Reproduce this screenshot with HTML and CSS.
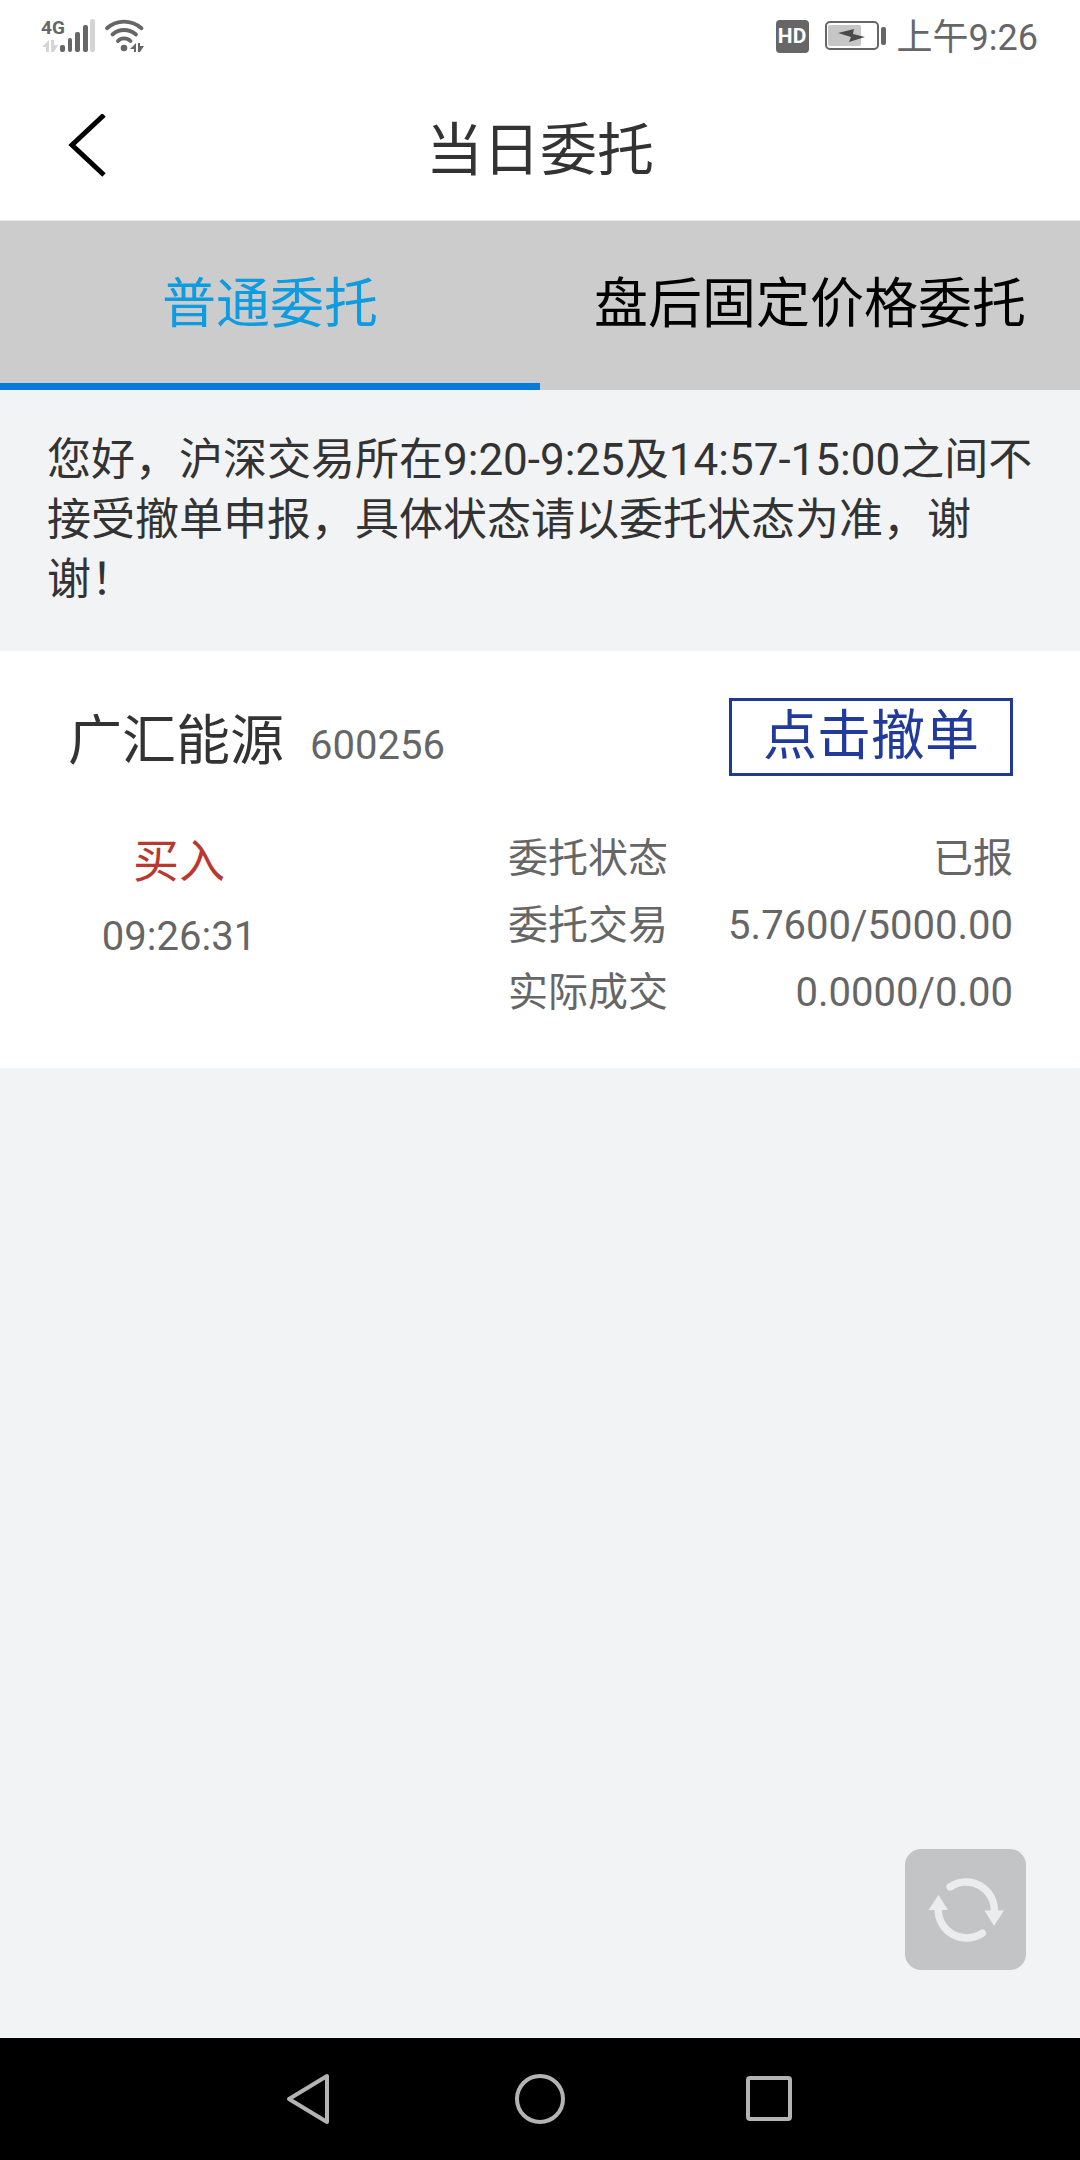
FILE: index.html
```html
<!DOCTYPE html>
<html lang="zh-CN">
<head>
<meta charset="utf-8">
<meta name="viewport" content="width=device-width, initial-scale=1">
<title>当日委托</title>
<link rel="stylesheet" href="styles.css">
</head>
<body>
<div class="status-bar">
  <svg class="status-signal" width="108" height="40" viewBox="40 16 108 40" role="img" aria-label="4G 信号与无线网络">
    <text class="network-type" x="41" y="34">4G</text>
    <g fill="#d4d4d4">
      <path d="M49 40v12h-3v-5h-4zM51 40h3v5h4l-4 7h-3z"/>
      <rect x="90" y="19" width="5" height="33" rx="2"/>
    </g>
    <g fill="#666">
      <rect x="60" y="45" width="5" height="7" rx="2"/>
      <rect x="68" y="38" width="4" height="14" rx="2"/>
      <rect x="75" y="32" width="5" height="20" rx="2"/>
      <rect x="83" y="25" width="5" height="27" rx="2"/>
      <circle cx="124" cy="48" r="3.3"/>
      <path d="M136 43v9h-2v-3h-4zM138 43h2v3h4l-4 6h-2z"/>
    </g>
    <g fill="none" stroke="#666" stroke-width="3.800" stroke-linecap="round">
      <path d="M107 28.200C117 19.500 131 19.500 141.500 28.200"/>
      <path d="M112.500 34.500C119 28.500 129 28.500 136 34.500"/>
      <path d="M118 41C121 37.500 127 37.500 130.500 41"/>
    </g>
  </svg>
  <div class="status-right">
    <span class="hd-badge">HD</span>
    <svg class="battery" width="62" height="32" viewBox="826 21 62 32" role="img" aria-label="正在充电">
      <rect x="827" y="23" width="52" height="27" rx="4" fill="none" stroke="#666" stroke-width="2"/>
      <rect x="829" y="26" width="33" height="21" rx="2" fill="#c6c6c6"/>
      <path d="M839 34L855 30L854 35L866 38L850 43L852 38Z" fill="#4a4a4a"/>
      <rect x="882" y="28" width="5" height="18" rx="2" fill="#666"/>
    </svg>
    <time class="clock">上午9:26</time>
  </div>
</div>

<header class="title-bar">
  <button class="back" type="button" aria-label="返回">
    <svg width="40" height="64" viewBox="0 0 40 64" aria-hidden="true">
      <path d="M36 1L4 31L36 61" fill="none" stroke="#000" stroke-width="5"/>
    </svg>
  </button>
  <h1 class="title">当日委托</h1>
</header>

<nav class="tabs">
  <a class="tab tab-active" href="#normal" aria-current="page">普通委托</a>
  <a class="tab" href="#after-hours">盘后固定价格委托</a>
</nav>

<main class="content">
  <p class="notice">您好，沪深交易所在9:20-9:25及14:57-15:00之间不接受撤单申报，具体状态请以委托状态为准，谢谢！</p>

  <article class="order">
    <div class="order-head">
      <h2 class="stock-name">广汇能源</h2>
      <span class="stock-code">600256</span>
      <button class="cancel" type="button">点击撤单</button>
    </div>
    <div class="order-body">
      <div class="order-side">
        <span class="direction">买入</span>
        <time class="order-time">09:26:31</time>
      </div>
      <dl class="details">
        <div class="detail"><dt>委托状态</dt><dd>已报</dd></div>
        <div class="detail"><dt>委托交易</dt><dd>5.7600/5000.00</dd></div>
        <div class="detail"><dt>实际成交</dt><dd>0.0000/0.00</dd></div>
      </dl>
    </div>
  </article>

  <button class="refresh" type="button" aria-label="刷新">
    <svg width="76" height="68" viewBox="0 0 76 68" aria-hidden="true">
      <g fill="none" stroke="#ebecee" stroke-width="7.500" stroke-linecap="round">
        <path d="M22.200 10.800A28.300 28.300 0 0 1 66.300 36"/>
        <path d="M54.300 57.200A28.300 28.300 0 0 1 10.300 32"/>
      </g>
      <path d="M56.500 34.500H76L66 50Z" fill="#ebecee"/>
      <path d="M0.500 34H20L10.500 19Z" fill="#ebecee"/>
    </svg>
  </button>
</main>

<footer class="system-nav">
  <button class="nav-key" type="button" aria-label="返回键">
    <svg width="54" height="54" viewBox="0 0 54 54" aria-hidden="true">
      <path d="M6 27L44 4V50Z"/>
    </svg>
  </button>
  <button class="nav-key" type="button" aria-label="主屏幕">
    <svg width="54" height="54" viewBox="0 0 54 54" aria-hidden="true">
      <circle cx="27" cy="27" r="23"/>
    </svg>
  </button>
  <button class="nav-key" type="button" aria-label="最近任务">
    <svg width="54" height="54" viewBox="0 0 54 54" aria-hidden="true">
      <rect x="5" y="6" width="42" height="41" rx="2"/>
    </svg>
  </button>
</footer>
</body>
</html>
```

FILE: styles.css
```css
* {
  box-sizing: border-box;
}

body {
  margin: 0;
  min-height: 100vh;
  display: flex;
  flex-direction: column;
  background: #f2f3f5;
  color: #333;
  font-family: Roboto, "Noto Sans CJK SC", sans-serif;
  font-size: 40px;
}

button {
  margin: 0;
  padding: 0;
  border: 0;
  background: none;
  color: inherit;
  font: inherit;
  cursor: pointer;
}

svg {
  display: block;
}

h1,
h2,
p,
dl,
dd {
  margin: 0;
  font-weight: 400;
}

/* Phone status bar */
.status-bar {
  display: flex;
  justify-content: space-between;
  align-items: center;
  height: 72px;
  padding: 0 42px 0 40px;
  background: #fff;
  color: #666;
}

.network-type {
  fill: #666;
  font-size: 19px;
  font-weight: 700;
}

.status-right {
  display: flex;
  align-items: center;
}

.hd-badge {
  width: 33px;
  margin-right: 16px;
  border-radius: 4px;
  background: #666;
  color: #fff;
  font-size: 21px;
  font-weight: 700;
  line-height: 33px;
  text-align: center;
}

.battery {
  margin-right: 10px;
}

.clock {
  padding-top: 4px;
  font-size: 36px;
  line-height: 40px;
}

/* Page title */
.title-bar {
  display: grid;
  grid-template-columns: 1fr auto 1fr;
  align-items: center;
  height: 149px;
  padding: 0 68px;
  border-bottom: 1px solid #e8e8e8;
  background: #fff;
}

.back {
  justify-self: start;
}

.title {
  padding-top: 10px;
  font-size: 57px;
  line-height: 80px;
}

/* Order type tabs */
.tabs {
  display: grid;
  grid-template-columns: 1fr 1fr;
  background: #ccc;
}

.tab {
  height: 169px;
  padding-top: 3px;
  border-bottom: 7px solid transparent;
  color: #000;
  font-size: 54px;
  line-height: 162px;
  text-align: center;
  text-decoration: none;
  white-space: nowrap;
}

.tab-active {
  border-color: #057bdb;
  color: #0f9be0;
}

.content {
  position: relative;
  flex: 1;
}

.notice {
  padding: 40px 40px 41px 47px;
  font-size: 44px;
  line-height: 60px;
}

/* Order card */
.order {
  padding: 47px 67px 42px 68px;
  background: #fff;
}

.order-head {
  display: flex;
  align-items: flex-end;
  gap: 26px;
  margin-bottom: 49px;
}

.stock-name {
  font-size: 54px;
  line-height: 68px;
}

.stock-code {
  color: #666;
  line-height: 60px;
}

.cancel {
  width: 284px;
  height: 78px;
  margin-left: auto;
  border: 3px solid #213a8f;
  color: #213a9b;
  font-size: 54px;
  line-height: 68px;
}

.order-body {
  display: flex;
  justify-content: space-between;
  color: #666;
}

.order-side {
  display: flex;
  flex-direction: column;
  align-items: center;
  width: 222px;
}

.direction {
  color: #b93830;
  font-size: 46px;
  line-height: 72px;
}

.order-time {
  line-height: 80px;
}

.details {
  width: 505px;
}

.detail {
  display: flex;
  justify-content: space-between;
  line-height: 67px;
}

/* Floating refresh control */
.refresh {
  position: absolute;
  right: 54px;
  bottom: 68px;
  display: grid;
  place-items: center;
  width: 121px;
  height: 121px;
  border-radius: 16px;
  background: #c3c4c6;
}

/* Phone navigation keys */
.system-nav {
  display: flex;
  justify-content: center;
  align-items: center;
  gap: 176px;
  height: 122px;
  background: #000;
}

.nav-key path,
.nav-key circle,
.nav-key rect {
  fill: none;
  stroke: #b3b3b3;
  stroke-width: 4;
  stroke-linejoin: round;
}
```
